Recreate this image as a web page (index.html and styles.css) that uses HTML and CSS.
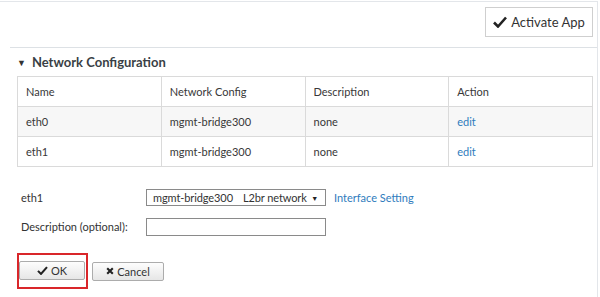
FILE: index.html
```html
<!DOCTYPE html>
<html>
<head>
<meta charset="utf-8">
<link rel="stylesheet" href="styles.css">
</head>
<body>
<div class="page">
  <div class="toolbar">
    <button class="btn-activate"><svg class="chk" viewBox="0 0 14 12" width="14" height="12"><path d="M1 6.5 L5 10.5 L13 1.5" fill="none" stroke="#222" stroke-width="2.6"/></svg>Activate App</button>
  </div>
  <div class="section">
    <div class="section-title"><span class="caret">&#9660;</span>Network Configuration</div>
    <table class="grid">
      <tr class="head"><td>Name</td><td>Network Config</td><td>Description</td><td>Action</td></tr>
      <tr class="alt"><td>eth0</td><td>mgmt-bridge300</td><td>none</td><td><a class="link">edit</a></td></tr>
      <tr><td>eth1</td><td>mgmt-bridge300</td><td>none</td><td><a class="link">edit</a></td></tr>
    </table>
    <div class="form">
      <div class="form-row">
        <label class="form-label">eth1</label>
        <div class="select"><span class="opt">mgmt-bridge300</span><span class="opt2">L2br network</span><span class="arrow">&#9660;</span></div>
        <a class="link setting">Interface Setting</a>
      </div>
      <div class="form-row">
        <label class="form-label">Description (optional):</label>
        <input class="text-input" type="text">
      </div>
      <div class="actions">
        <span class="highlight"><button class="btn"><svg class="chk" viewBox="0 0 14 12" width="11" height="9"><path d="M1 6.5 L5 10.5 L13 1.5" fill="none" stroke="#222" stroke-width="2.8"/></svg>OK</button></span>
        <button class="btn cancel"><svg class="x" viewBox="0 0 10 10" width="8" height="8"><path d="M1.5 1.5 L8.5 8.5 M8.5 1.5 L1.5 8.5" fill="none" stroke="#222" stroke-width="2.6"/></svg>Cancel</button>
      </div>
    </div>
  </div>
</div>
</body>
</html>
```
FILE: styles.css
```css
html, body {
  margin: 0;
  padding: 0;
  background: #fff;
}
body {
  width: 600px;
  height: 297px;
  overflow: hidden;
  padding-top: 1px;
  box-sizing: border-box;
  font-family: Lato, "Liberation Sans", sans-serif;
  color: #333;
}
.page {
  width: 598px;
  height: 296px;
  border-top: 1px solid #e3e6ea;
  border-right: 1px solid #e3e6ea;
  box-sizing: border-box;
}
.toolbar {
  height: 46px;
  margin-left: 10px;
  border-bottom: 1px solid #dde1e5;
  box-sizing: border-box;
  display: flex;
  justify-content: flex-end;
  align-items: flex-start;
  padding: 5px 4px 0 0;
}
.btn-activate {
  height: 30px;
  width: 108px;
  background: #fff;
  border: 1px solid #cfcfcf;
  border-radius: 0;
  font-family: Lato, "Liberation Sans", sans-serif;
  font-size: 13px;
  color: #333;
  display: flex;
  align-items: center;
  justify-content: center;
  gap: 4px;
  padding: 0;
}
.section-title {
  height: 28px;
  display: flex;
  align-items: center;
  padding-left: 17px;
  font-size: 13px;
  font-weight: bold;
  color: #3a3f45;
}
.caret {
  font-size: 9px;
  margin-right: 6px;
  color: #333;
}
.grid {
  margin-left: 17px;
  width: 576px;
  border-collapse: collapse;
  table-layout: fixed;
  font-size: 11px;
}
.grid td {
  border: 1px solid #dadada;
  height: 30px;
  padding: 0 0 0 8px;
  box-sizing: border-box;
  color: #383838;
}
.grid tr.alt td {
  background: #f7f7f7;
}
.link {
  color: #2f7cbd;
  text-decoration: none;
}
.form {
  padding: 22px 0 0 21px;
  font-size: 11px;
}
.form-row {
  display: flex;
  align-items: center;
  height: 17px;
  margin-bottom: 12px;
}
.form-label {
  width: 125px;
  flex-shrink: 0;
}
.select {
  width: 180px;
  height: 17px;
  flex-shrink: 0;
  box-sizing: border-box;
  border: 1px solid #8a8a8a;
  display: flex;
  align-items: center;
  padding-left: 6px;
  font-size: 11px;
  letter-spacing: -0.1px;
  white-space: nowrap;
}
.opt2 {
  margin-left: 10px;
}
.arrow {
  margin-left: auto;
  margin-right: 7px;
  font-size: 7px;
  color: #222;
}
.setting {
  margin-left: 8px;
  white-space: nowrap;
}
.text-input {
  width: 180px;
  height: 18px;
  box-sizing: border-box;
  border: 1px solid #8a8a8a;
  margin: 0;
  padding: 0;
}
.actions {
  display: flex;
  align-items: center;
  margin-left: -4px;
  margin-top: 18px;
  gap: 4px;
}
.highlight {
  display: inline-block;
  border: 2px solid #d9262a;
  padding: 6px 1px 7px 0;
}
.btn {
  width: 66px;
  height: 19px;
  padding: 0;
  border: 1px solid #acacac;
  border-radius: 2px;
  background: linear-gradient(#fdfdfd, #e6e6e6);
  font-family: Lato, "Liberation Sans", sans-serif;
  font-size: 11px;
  color: #333;
  display: flex;
  align-items: center;
  justify-content: center;
  gap: 3px;
}
.btn.cancel {
  width: 72px;
}
```
